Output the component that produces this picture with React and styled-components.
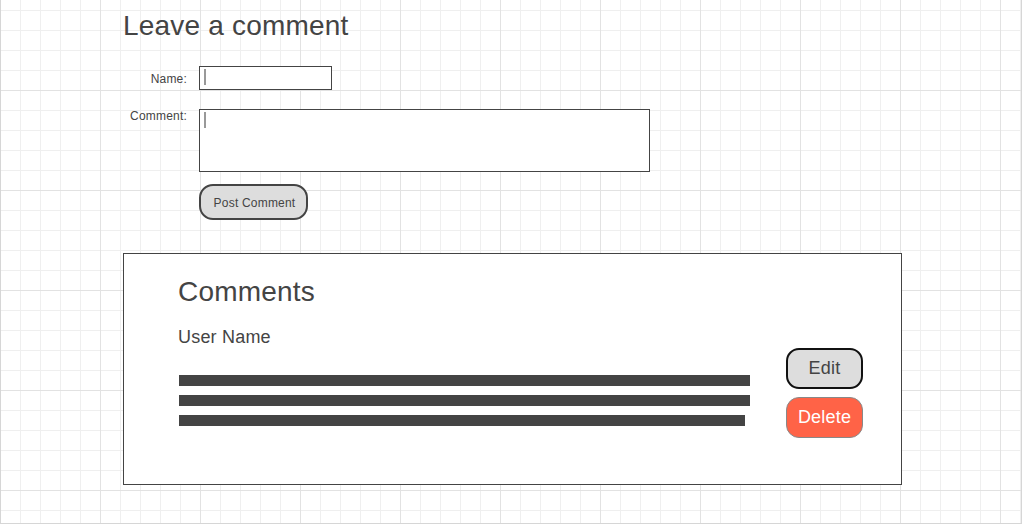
import React from "react";
import styled, { createGlobalStyle } from "styled-components";

const Global = createGlobalStyle`
  html, body { margin: 0; padding: 0; background: #fff; }
  body { font-family: "Liberation Sans", Arial, sans-serif; color: #444; letter-spacing: 0.2px; }
  button { letter-spacing: 0.2px; }
`;

const Canvas = styled.div`
  box-sizing: border-box;
  width: 1022px;
  height: 524px;
  border-left: 1px solid #d6d6d6;
  border-right: 1px solid #d6d6d6;
  border-bottom: 1px solid #d6d6d6;
  padding-left: 122px;
  background-color: #fff;
  background-origin: border-box;
  background-image:
    linear-gradient(to right, #e2e2e2 1px, transparent 1px),
    linear-gradient(to bottom, #e2e2e2 1px, transparent 1px),
    linear-gradient(to right, #efefef 1px, transparent 1px),
    linear-gradient(to bottom, #efefef 1px, transparent 1px);
  background-size: 100px 100px, 100px 100px, 20px 20px, 20px 20px;
  background-position: 0 0, 0 90px, 0 0, 0 10px;
`;

const Column = styled.div`
  width: 779px;
  display: flex;
  flex-direction: column;
`;

const Title = styled.h1`
  margin: 10px 0 0;
  font-size: 28px;
  line-height: 32px;
  font-weight: 400;
  color: #444;
`;

const Form = styled.form`
  margin-top: 24px;
  display: grid;
  grid-template-columns: 64px auto;
  column-gap: 12px;
  align-items: start;
`;

const Label = styled.label`
  text-align: right;
  font-size: 12px;
  line-height: 14px;
  color: #444;
  padding-top: ${(p) => p.$offset}px;
  margin-top: ${(p) => p.$gap}px;
`;

const Field = styled.div`
  position: relative;
  box-sizing: border-box;
  width: ${(p) => p.$w}px;
  height: ${(p) => p.$h}px;
  margin-top: ${(p) => p.$gap}px;
  border: 1px solid #444;
  background: #fff;
`;

const Caret = styled.span`
  position: absolute;
  left: 4px;
  top: 2px;
  width: 2px;
  height: 16px;
  background: #999;
`;

const PostButton = styled.button`
  grid-column: 2;
  margin-top: 12px;
  box-sizing: border-box;
  width: 109px;
  height: 36px;
  border: 2px solid #444;
  border-radius: 14px;
  background: #ddd;
  color: #444;
  font-family: "Liberation Sans", Arial, sans-serif;
  font-size: 12px;
  padding: 2px 0 0 2px;
`;

const CommentsBox = styled.section`
  box-sizing: border-box;
  margin-top: 33px;
  width: 779px;
  height: 232px;
  border: 1px solid #444;
  background: #fff;
  padding: 22px 38px 0 54px;
`;

const Heading = styled.h2`
  margin: 0;
  font-size: 28px;
  line-height: 32px;
  font-weight: 400;
  color: #444;
`;

const UserName = styled.div`
  margin-top: 19px;
  font-size: 18px;
  line-height: 21px;
  color: #444;
`;

const CommentRow = styled.div`
  display: flex;
  align-items: flex-start;
  justify-content: space-between;
`;

const Lines = styled.div`
  margin-top: 27px;
  padding-left: 1px;
  display: flex;
  flex-direction: column;
  gap: 9px;
`;

const Line = styled.div`
  height: 11px;
  width: ${(p) => p.$w}px;
  background: #444;
`;

const Actions = styled.div`
  display: flex;
  flex-direction: column;
  gap: 8px;
`;

const ActionButton = styled.button`
  box-sizing: border-box;
  width: 77px;
  height: 41px;
  border-radius: 13px;
  font-family: "Liberation Sans", Arial, sans-serif;
  font-size: 18px;
  padding: 0;
  border: ${(p) => (p.$danger ? "1px solid #888" : "2px solid #111")};
  background: ${(p) => (p.$danger ? "#ff6347" : "#ddd")};
  color: ${(p) => (p.$danger ? "#fff" : "#444")};
`;

export default function App() {
  return (
    <>
      <Global />
      <Canvas>
        <Column>
          <Title>Leave a comment</Title>
          <Form onSubmit={(e) => e.preventDefault()}>
            <Label $offset={6} $gap={0}>Name:</Label>
            <Field $w={133} $h={24} $gap={0}>
              <Caret />
            </Field>
            <Label $offset={0} $gap={19}>Comment:</Label>
            <Field $w={451} $h={63} $gap={19}>
              <Caret />
            </Field>
            <PostButton type="button">Post Comment</PostButton>
          </Form>
          <CommentsBox>
            <Heading>Comments</Heading>
            <UserName>User Name</UserName>
            <CommentRow>
              <Lines>
                <Line $w={571} />
                <Line $w={571} />
                <Line $w={566} />
              </Lines>
              <Actions>
                <ActionButton type="button">Edit</ActionButton>
                <ActionButton type="button" $danger>Delete</ActionButton>
              </Actions>
            </CommentRow>
          </CommentsBox>
        </Column>
      </Canvas>
    </>
  );
}
